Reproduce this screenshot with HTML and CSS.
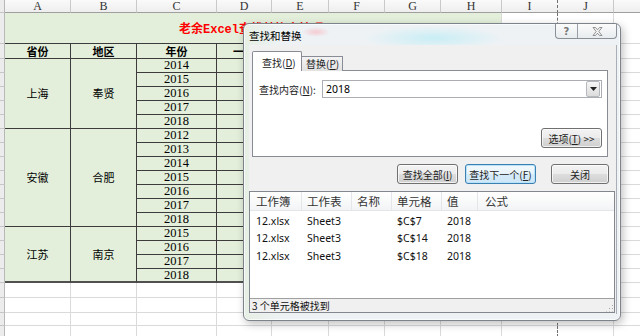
FILE: index.html
```html
<!DOCTYPE html>
<html lang="zh-cn">

<head>
  <meta charset="UTF-8">
  <meta name="viewport" content="width=device-width, initial-scale=1.0">
  <title>查找和替换</title>
  <link rel="stylesheet" href="styles.css">
</head>

<body>
  <div class="sheet">
    <table class="grid">
      <colgroup>
        <col class="c-rh"><col class="c-a"><col class="c-b"><col class="c-c"><col class="c-d"><col class="c-e">
        <col class="c-f"><col class="c-g"><col class="c-h"><col class="c-i"><col class="c-j"><col class="c-k">
      </colgroup>
      <tr class="r-cols">
        <td class="rh"></td><td>A</td><td>B</td><td>C</td><td>D</td><td>E</td>
        <td>F</td><td>G</td><td>H</td><td class="pb">I</td><td>J</td><td></td>
      </tr>
      <tr class="r-title">
        <td class="rh"></td>
        <td colspan="8" class="title">老余Excel查找替换小技巧</td>
        <td class="pb"></td><td></td><td></td>
      </tr>
      <tr class="r-head">
        <td class="rh"></td>
        <td class="t th">省份</td><td class="t th">地区</td><td class="t th">年份</td><td class="t th">一月</td>
        <td></td><td></td><td></td><td></td><td class="pb"></td><td></td><td></td>
      </tr>
      <!-- 上海 -->
      <tr class="r-d">
        <td class="rh"></td>
        <td class="t cn" rowspan="5">上海</td><td class="t cn" rowspan="5">奉贤</td>
        <td class="t yr">2014</td><td class="t"></td>
        <td></td><td></td><td></td><td></td><td class="pb"></td><td></td><td></td>
      </tr>
      <tr class="r-d">
        <td class="rh"></td><td class="t yr">2015</td><td class="t"></td>
        <td></td><td></td><td></td><td></td><td class="pb"></td><td></td><td></td>
      </tr>
      <tr class="r-d">
        <td class="rh"></td><td class="t yr">2016</td><td class="t"></td>
        <td></td><td></td><td></td><td></td><td class="pb"></td><td></td><td></td>
      </tr>
      <tr class="r-d">
        <td class="rh"></td><td class="t yr">2017</td><td class="t"></td>
        <td></td><td></td><td></td><td></td><td class="pb"></td><td></td><td></td>
      </tr>
      <tr class="r-d">
        <td class="rh"></td><td class="t yr">2018</td><td class="t"></td>
        <td></td><td></td><td></td><td></td><td class="pb"></td><td></td><td></td>
      </tr>
      <!-- 安徽 -->
      <tr class="r-d">
        <td class="rh"></td>
        <td class="t cn" rowspan="7">安徽</td><td class="t cn" rowspan="7">合肥</td>
        <td class="t yr">2012</td><td class="t"></td>
        <td></td><td></td><td></td><td></td><td class="pb"></td><td></td><td></td>
      </tr>
      <tr class="r-d">
        <td class="rh"></td><td class="t yr">2013</td><td class="t"></td>
        <td></td><td></td><td></td><td></td><td class="pb"></td><td></td><td></td>
      </tr>
      <tr class="r-d">
        <td class="rh"></td><td class="t yr">2014</td><td class="t"></td>
        <td></td><td></td><td></td><td></td><td class="pb"></td><td></td><td></td>
      </tr>
      <tr class="r-d">
        <td class="rh"></td><td class="t yr">2015</td><td class="t"></td>
        <td></td><td></td><td></td><td></td><td class="pb"></td><td></td><td></td>
      </tr>
      <tr class="r-d">
        <td class="rh"></td><td class="t yr">2016</td><td class="t"></td>
        <td></td><td></td><td></td><td></td><td class="pb"></td><td></td><td></td>
      </tr>
      <tr class="r-d">
        <td class="rh"></td><td class="t yr">2017</td><td class="t"></td>
        <td></td><td></td><td></td><td></td><td class="pb"></td><td></td><td></td>
      </tr>
      <tr class="r-d">
        <td class="rh"></td><td class="t yr">2018</td><td class="t"></td>
        <td></td><td></td><td></td><td></td><td class="pb"></td><td></td><td></td>
      </tr>
      <!-- 江苏 -->
      <tr class="r-d">
        <td class="rh"></td>
        <td class="t cn last" rowspan="4">江苏</td><td class="t cn last" rowspan="4">南京</td>
        <td class="t yr">2015</td><td class="t"></td>
        <td></td><td></td><td></td><td></td><td class="pb"></td><td></td><td></td>
      </tr>
      <tr class="r-d">
        <td class="rh"></td><td class="t yr">2016</td><td class="t"></td>
        <td></td><td></td><td></td><td></td><td class="pb"></td><td></td><td></td>
      </tr>
      <tr class="r-d">
        <td class="rh"></td><td class="t yr">2017</td><td class="t"></td>
        <td></td><td></td><td></td><td></td><td class="pb"></td><td></td><td></td>
      </tr>
      <tr class="r-d">
        <td class="rh"></td><td class="t yr last">2018</td><td class="t last"></td>
        <td></td><td></td><td></td><td></td><td class="pb"></td><td></td><td></td>
      </tr>
      <!-- 空行 -->
      <tr class="r-e">
        <td class="rh"></td><td></td><td></td><td></td><td></td><td></td>
        <td></td><td></td><td></td><td class="pb"></td><td></td><td></td>
      </tr>
      <tr class="r-e">
        <td class="rh"></td><td></td><td></td><td></td><td></td><td></td>
        <td></td><td></td><td></td><td class="pb"></td><td></td><td></td>
      </tr>
      <tr class="r-e short">
        <td class="rh"></td><td></td><td></td><td></td><td></td><td></td>
        <td></td><td></td><td></td><td class="pb"></td><td></td><td></td>
      </tr>
      <tr class="r-e">
        <td class="rh"></td><td></td><td></td><td></td><td></td><td></td>
        <td></td><td></td><td></td><td class="pb"></td><td></td><td></td>
      </tr>
    </table>

    <!-- 查找和替换 对话框 -->
    <div class="dialog">
      <div class="dlg-title">
        <span class="dlg-caption">查找和替换</span>
        <div class="cap-btns">
          <span class="cap-btn help">?</span>
          <span class="cap-btn close">
            <svg width="11" height="9" viewBox="0 0 11 9">
              <path d="M1 0.5 H3.5 L5.5 2.8 L7.5 0.5 H10 L6.8 4.5 L10 8.5 H7.5 L5.5 6.2 L3.5 8.5 H1 L4.2 4.5 Z"
                fill="#f4f4f4" stroke="#7a7a7a" stroke-width="0.8" />
            </svg>
          </span>
        </div>
      </div>

      <div class="client">
        <div class="tabs">
          <span class="tab active">查找(<u>D</u>)</span>
          <span class="tab">替换(<u>P</u>)</span>
        </div>
        <div class="tab-panel">
          <div class="find-row">
            <label class="find-label">查找内容(<u>N</u>):</label>
            <div class="combo">
              <span class="combo-text">2018</span>
              <span class="combo-drop">
                <svg width="7" height="4" viewBox="0 0 7 4"><path d="M0 0 H7 L3.5 4 Z" fill="#222" /></svg>
              </span>
            </div>
          </div>
          <button class="btn btn-options">选项(<u>T</u>) &gt;&gt;</button>
        </div>

        <div class="actions">
          <button class="btn btn-all">查找全部(<u>I</u>)</button>
          <button class="btn btn-next">查找下一个(<u>F</u>)</button>
          <button class="btn btn-close">关闭</button>
        </div>

        <div class="results">
          <div class="res-list">
            <div class="res-row res-head">
              <span>工作簿</span><span>工作表</span><span>名称</span><span>单元格</span><span>值</span><span>公式</span>
            </div>
            <div class="res-row">
              <span>12.xlsx</span><span>Sheet3</span><span></span><span>$C$7</span><span>2018</span><span></span>
            </div>
            <div class="res-row">
              <span>12.xlsx</span><span>Sheet3</span><span></span><span>$C$14</span><span>2018</span><span></span>
            </div>
            <div class="res-row">
              <span>12.xlsx</span><span>Sheet3</span><span></span><span>$C$18</span><span>2018</span><span></span>
            </div>
          </div>
          <div class="status">
            <span>3 个单元格被找到</span>
            <span class="grip"></span>
          </div>
        </div>
      </div>
    </div>
  </div>
</body>

</html>
```

FILE: styles.css
```css
body {
  margin: 0;
  background: #fff;
  font-family: "Noto Sans CJK SC", sans-serif;
}

.sheet {
  position: relative;
  width: 640px;
  height: 336px;
  overflow: hidden;
}

/* 表格 */
.grid {
  border-collapse: separate;
  border-spacing: 0;
  table-layout: fixed;
  width: 660px;
  font-family: "Liberation Serif", "Noto Sans CJK SC", serif;
  font-size: 12px;
  color: #000;
}

.grid td {
  padding: 0;
  border-right: 1px solid #dadada;
  border-bottom: 1px solid #dadada;
  text-align: center;
  vertical-align: middle;
  line-height: 11px;
  white-space: nowrap;
  overflow: hidden;
}

.c-rh { width: 5px; }
.c-a { width: 66px; }
.c-b { width: 66px; }
.c-c { width: 80px; }
.c-d { width: 55px; }
.c-e { width: 57px; }
.c-f { width: 56px; }
.c-g { width: 56px; }
.c-h { width: 61px; }
.c-i { width: 56px; }
.c-j { width: 56px; }
.c-k { width: 46px; }

.r-cols { height: 13px; }
.r-title { height: 31px; }
.r-head { height: 15px; }
.r-d { height: 14px; }
.r-e { height: 15px; }
.r-e.short { height: 13px; }

.r-cols td {
  background: linear-gradient(#fafafa, #eeeeee);
  border-right-color: #c9c9c9;
  border-bottom-color: #9f9f9f;
  color: #333;
  font-size: 12px;
}

.grid td.rh {
  background: #ececec;
  border-right-color: #b8b8b8;
  border-bottom-color: #c6c6c6;
}

.grid td.pb {
  border-right: 1px dashed #6f6f6f;
}

.grid td.title {
  height: 30px;
  box-sizing: border-box;
  padding-top: 5px;
  vertical-align: top;
  line-height: 24px;
  background: #e3efda;
  border-bottom-color: #3c3c3c;
  color: #f00;
  font-family: "Liberation Mono", "Noto Sans CJK SC", monospace;
  font-weight: bold;
  font-size: 12px;
  text-align: center;
  text-indent: -4px;
}

.grid td.t {
  background: #e3efda;
  border-right-color: #3c3c3c;
  border-bottom-color: #3c3c3c;
}

.grid td.th {
  font-family: "Noto Sans CJK SC", sans-serif;
  font-weight: bold;
  font-size: 11px;
}

.grid td.cn {
  font-family: "Noto Sans CJK SC", sans-serif;
  font-size: 11px;
}

.grid td.yr {
  font-size: 12.5px;
}

.grid td.last {
  border-bottom: 2px solid #505050;
}

/* 对话框 */
.dialog {
  position: absolute;
  z-index: 2;
  left: 243px;
  top: 23px;
  width: 378px;
  height: 298px;
  box-sizing: border-box;
  border: 1px solid #7d838b;
  border-radius: 6px;
  background:
    radial-gradient(ellipse 14px 5px at 72px 8px, rgba(250, 170, 180, 0.55), transparent),
    radial-gradient(ellipse 70px 12px at 190px 14px, rgba(175, 235, 245, 0.6), transparent),
    linear-gradient(90deg, #e6efe4 0, #eef2f5 40px, #eef2f5 100%);
  box-shadow: inset 0 0 0 1px rgba(255, 255, 255, 0.7), 2px 3px 8px rgba(0, 0, 0, 0.25);
  display: flex;
  flex-direction: column;
  font-family: "Noto Sans CJK SC", "Noto Sans", sans-serif;
  font-size: 10px;
  color: #000;
}

.dlg-title {
  height: 21px;
  display: flex;
  align-items: flex-start;
  padding-left: 5px;
}

.dlg-caption {
  margin-top: 6px;
  font-size: 10.5px;
  line-height: 12px;
}

.cap-btns {
  margin-left: auto;
  margin-right: 3px;
  display: flex;
  height: 14px;
  border: 1px solid #8a9098;
  border-top: none;
  border-radius: 0 0 4px 4px;
  background: linear-gradient(#fbfbfb, #e8ecef);
}

.cap-btn {
  display: flex;
  align-items: center;
  justify-content: center;
  height: 14px;
}

.cap-btn.help {
  width: 21px;
  border-right: 1px solid #9aa0a8;
  font-family: "DejaVu Sans", sans-serif;
  font-size: 10px;
  color: #777;
  font-weight: bold;
}

.cap-btn.close {
  width: 38px;
}

.client {
  flex: 1;
  margin: 0 3px 6px 5px;
  background: #f0f0f0;
  border-right: 1px solid #a9afb6;
  display: flex;
  flex-direction: column;
}

.tabs {
  display: flex;
  align-items: flex-end;
  height: 20px;
  margin: 6px 0 -1px 3px;
  position: relative;
  z-index: 1;
}

.tab {
  box-sizing: border-box;
  width: 41px;
  height: 15px;
  border: 1px solid #898c95;
  border-bottom: none;
  border-left: none;
  background: linear-gradient(#f3f3f3, #e2e2e2);
  padding-left: 4px;
  font-size: 10px;
  line-height: 13px;
  color: #222;
}

.tab.active {
  width: 50px;
  height: 20px;
  border-left: 1px solid #898c95;
  border-radius: 2px 2px 0 0;
  background: #fff;
  padding-left: 9px;
  line-height: 21px;
}

.tab-panel {
  box-sizing: border-box;
  height: 87px;
  margin: 0 8px 0 3px;
  border: 1px solid #898c95;
  background: #fff;
  padding: 9px 5px 8px 6px;
  display: flex;
  flex-direction: column;
}

.find-row {
  display: flex;
  align-items: center;
  height: 18px;
}

.find-label {
  width: 63px;
  font-size: 10px;
  color: #222;
}

.combo {
  flex: 1;
  box-sizing: border-box;
  height: 18px;
  border: 1px solid #abadb3;
  display: flex;
  align-items: center;
  background: #fff;
}

.combo-text {
  flex: 1;
  padding-left: 3px;
  font-family: "Noto Sans", sans-serif;
  font-size: 10.5px;
}

.combo-drop {
  width: 12px;
  height: 14px;
  margin-right: 1px;
  border: 1px solid #b5b8bd;
  border-radius: 2px;
  background: linear-gradient(#f6f6f6, #dcdcdc);
  display: flex;
  align-items: center;
  justify-content: center;
}

.btn {
  box-sizing: border-box;
  height: 20px;
  padding: 0;
  border: 1px solid #707070;
  border-radius: 3px;
  background: linear-gradient(#f3f3f3 0%, #ebebeb 50%, #dddddd 51%, #cfcfcf 100%);
  box-shadow: inset 0 0 0 1px rgba(255, 255, 255, 0.7);
  font-family: "Noto Sans CJK SC", sans-serif;
  font-size: 10px;
  color: #222;
}

.btn-options {
  width: 61px;
  margin-top: auto;
  align-self: flex-end;
}

.actions {
  display: flex;
  justify-content: flex-end;
  margin: 7px 7px 0 0;
}

.btn-all { width: 61px; }

.btn-next {
  width: 71px;
  margin-left: 7px;
  border-color: #3c7fb1;
  background: linear-gradient(#f4fafd 0%, #e7f3fa 50%, #d6ebf8 51%, #cde6f6 100%);
  box-shadow: inset 0 0 0 1px #b9e2fb;
}

.btn-close {
  width: 58px;
  margin-left: 15px;
}

.results {
  flex: 1;
  margin: 7px 1px 1px 0;
  border: 1px solid #828790;
  display: flex;
  flex-direction: column;
  background: #fff;
}

.res-list {
  flex: 1;
}

.res-row {
  display: grid;
  grid-template-columns: 52px 50px 40px 50px 36px 1fr;
  height: 17.5px;
  align-items: center;
  font-family: "Noto Sans", "Noto Sans CJK SC", sans-serif;
  font-size: 10.5px;
  color: #111;
}

.res-row span {
  padding-left: 5px;
}

.res-row span:first-child {
  padding-left: 6px;
}

.res-head {
  height: 18px;
  background: linear-gradient(#ffffff, #f3f4f6);
  border-bottom: 1px solid #e3e5e8;
  font-family: "Noto Sans CJK SC", sans-serif;
  font-size: 11.5px;
  color: #333;
  margin-bottom: 1px;
}

.res-head span {
  height: 18px;
  line-height: 18px;
  border-right: 1px solid #e4e6ea;
}

.res-head span:last-child {
  border-right: none;
  padding-left: 7px;
}

.status {
  height: 13px;
  border-top: 1px solid #a0a0a0;
  background: #f0f0f0;
  display: flex;
  align-items: center;
  padding-left: 2px;
  font-size: 10px;
  line-height: 13px;
  color: #111;
}

.grip {
  margin-left: auto;
  width: 8px;
  height: 8px;
  margin-right: 1px;
  margin-top: 4px;
  background: radial-gradient(circle, #a6a6a6 0.8px, transparent 1px) 0 0 / 3px 3px;
  clip-path: polygon(100% 0, 100% 100%, 0 100%);
}
```
